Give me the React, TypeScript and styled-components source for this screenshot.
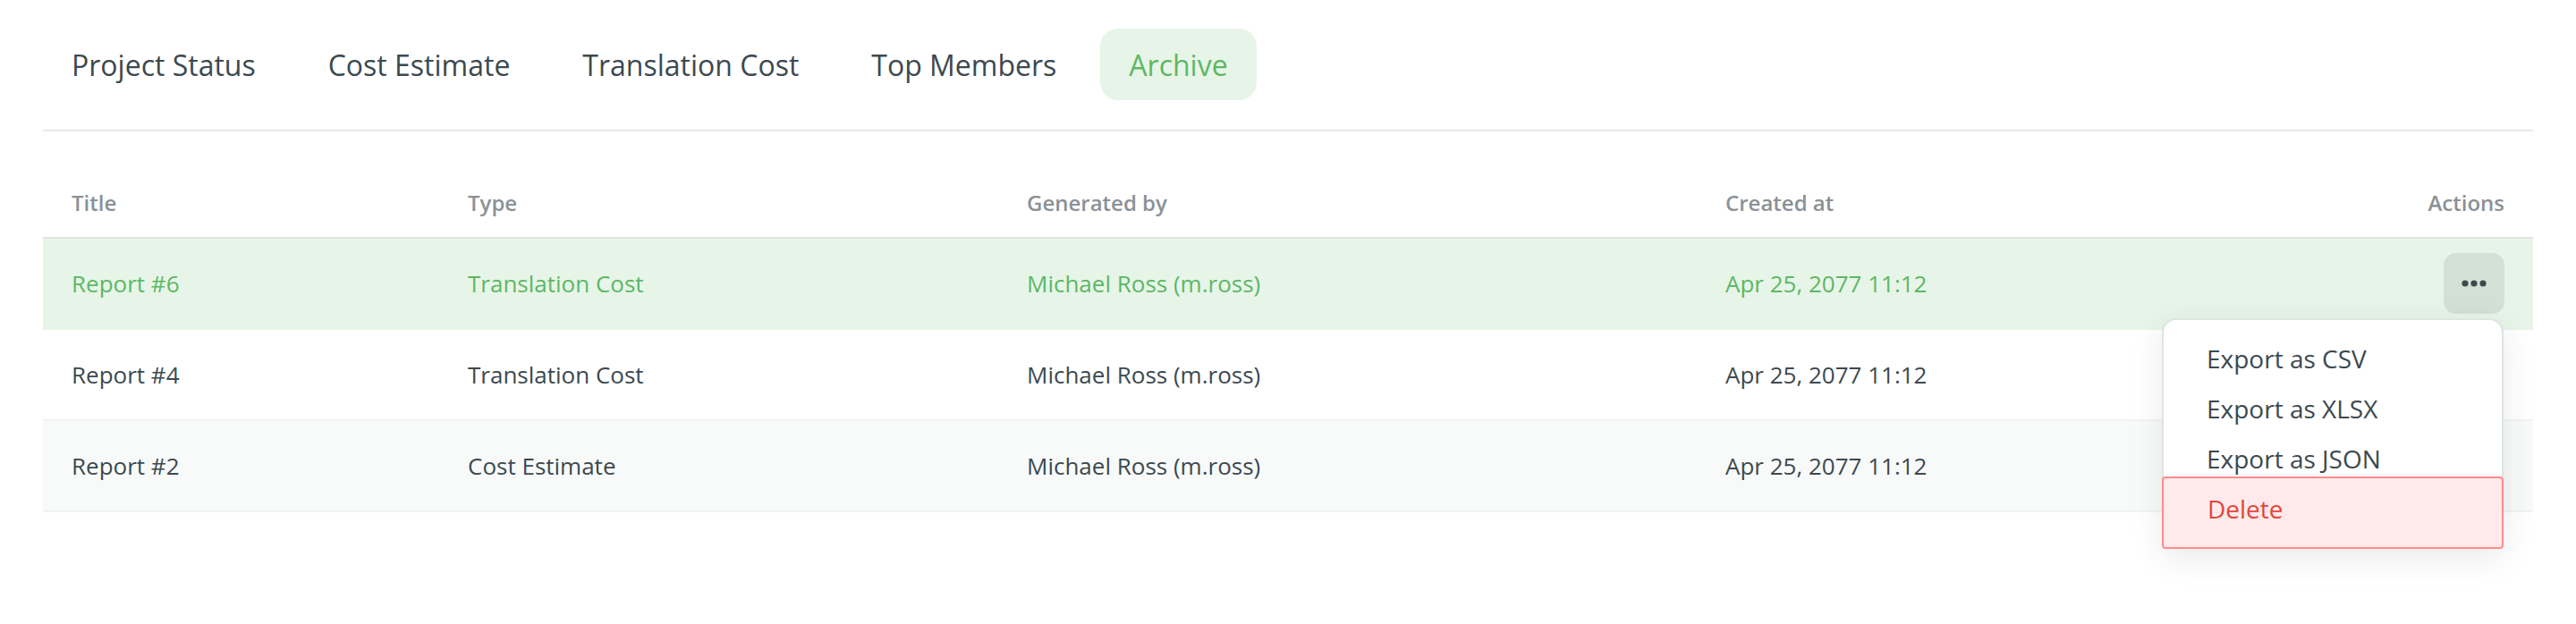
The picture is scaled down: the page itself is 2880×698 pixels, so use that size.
import React from "react";
import styled, { createGlobalStyle } from "styled-components";

const GlobalStyle = createGlobalStyle`
  html, body {
    margin: 0;
    padding: 0;
    background: #ffffff;
    font-family: "Open Sans", "Noto Sans", sans-serif;
    -webkit-font-smoothing: antialiased;
  }
`;

const Page = styled.div`
  padding: 32px 48px 0;
  box-sizing: border-box;
  width: 2880px;
  min-height: 698px;
`;

const TabBar = styled.nav`
  display: flex;
  gap: 17px;
  padding-bottom: 33px;
  border-bottom: 2px solid #e8e9ea;
`;

const Tab = styled.button<{ $active?: boolean }>`
  height: 80px;
  padding: 0 32px;
  border: none;
  border-radius: 20px;
  font-family: inherit;
  font-size: 32px;
  font-weight: 400;
  cursor: pointer;
  background: ${(p) => (p.$active ? "#e7f5e8" : "transparent")};
  color: ${(p) => (p.$active ? "#5cb865" : "#3c494f")};
`;

const Table = styled.div`
  margin-top: 40px;
  display: grid;
  grid-template-columns: 443px 625px 781px 1fr auto;
`;

const HeaderRow = styled.div`
  display: contents;
`;

const HeadCell = styled.div<{ $right?: boolean }>`
  height: 78px;
  display: flex;
  align-items: center;
  justify-content: ${(p) => (p.$right ? "flex-end" : "flex-start")};
  padding: 0 32px;
  font-size: 24px;
  font-weight: 600;
  color: #8b9196;
  border-bottom: 2px solid #dfe4e1;
`;

const Row = styled.div`
  display: contents;
`;

const Cell = styled.div<{ $tone: "active" | "plain" | "alt"; $right?: boolean }>`
  position: relative;
  height: 100px;
  display: flex;
  align-items: center;
  justify-content: ${(p) => (p.$right ? "flex-end" : "flex-start")};
  padding: 0 32px;
  font-size: 26px;
  color: ${(p) => (p.$tone === "active" ? "#5cb865" : "#3c494f")};
  background: ${(p) =>
    p.$tone === "active" ? "#e7f5e8" : p.$tone === "alt" ? "#f8faf9" : "#ffffff"};
  border-bottom: 2px solid ${(p) => (p.$tone === "active" ? "#e7f5e8" : "#f1f3f2")};
`;

const MoreButton = styled.button`
  width: 68px;
  height: 68px;
  border: none;
  border-radius: 14px;
  background: #d3e0d6;
  display: flex;
  align-items: center;
  justify-content: center;
  padding: 0;
  cursor: pointer;
`;

const Menu = styled.ul`
  position: absolute;
  top: 89px;
  right: 33px;
  width: 382px;
  box-sizing: border-box;
  margin: 0;
  padding: 15px 0 0;
  list-style: none;
  background: #ffffff;
  border: 2px solid #dde5df;
  border-radius: 16px;
  box-shadow: 0 10px 36px rgba(30, 50, 40, 0.1);
  z-index: 10;
`;

const MenuItem = styled.li<{ $danger?: boolean }>`
  padding: 12px 48px;
  font-size: 28px;
  line-height: 32px;
  color: #3c494f;
  cursor: pointer;
  ${(p) =>
    p.$danger &&
    `
    margin: -8px -2px -2px;
    padding: 18px 48px 27px 49px;
    color: #e1463c;
    background: #ffe9ea;
    border: 2px solid #ff8c8a;
    border-radius: 4px;
  `}
`;

const Dots = () => (
  <svg width="28" height="8" viewBox="0 0 28 8">
    <circle cx="4" cy="4" r="3.6" fill="#3c494f" />
    <circle cx="14" cy="4" r="3.6" fill="#3c494f" />
    <circle cx="24" cy="4" r="3.6" fill="#3c494f" />
  </svg>
);

type Tone = "active" | "plain" | "alt";
const rows: { title: string; type: string; by: string; at: string; tone: Tone; open?: boolean }[] = [
  { title: "Report #6", type: "Translation Cost", by: "Michael Ross (m.ross)", at: "Apr 25, 2077 11:12", tone: "active", open: true },
  { title: "Report #4", type: "Translation Cost", by: "Michael Ross (m.ross)", at: "Apr 25, 2077 11:12", tone: "plain" },
  { title: "Report #2", type: "Cost Estimate", by: "Michael Ross (m.ross)", at: "Apr 25, 2077 11:12", tone: "alt" },
];

const tabs = ["Project Status", "Cost Estimate", "Translation Cost", "Top Members", "Archive"];

export default function App() {
  return (
    <Page>
      <GlobalStyle />
      <TabBar>
        {tabs.map((t) => (
          <Tab key={t} $active={t === "Archive"}>
            {t}
          </Tab>
        ))}
      </TabBar>
      <Table>
        <HeaderRow>
          <HeadCell>Title</HeadCell>
          <HeadCell>Type</HeadCell>
          <HeadCell>Generated by</HeadCell>
          <HeadCell>Created at</HeadCell>
          <HeadCell $right>Actions</HeadCell>
        </HeaderRow>
        {rows.map((r) => (
          <Row key={r.title}>
            <Cell $tone={r.tone}>{r.title}</Cell>
            <Cell $tone={r.tone}>{r.type}</Cell>
            <Cell $tone={r.tone}>{r.by}</Cell>
            <Cell $tone={r.tone}>{r.at}</Cell>
            <Cell $tone={r.tone} $right>
              {r.open && (
                <>
                  <MoreButton aria-label="Actions">
                    <Dots />
                  </MoreButton>
                  <Menu>
                    <MenuItem>Export as CSV</MenuItem>
                    <MenuItem>Export as XLSX</MenuItem>
                    <MenuItem>Export as JSON</MenuItem>
                    <MenuItem $danger>Delete</MenuItem>
                  </Menu>
                </>
              )}
            </Cell>
          </Row>
        ))}
      </Table>
    </Page>
  );
}
